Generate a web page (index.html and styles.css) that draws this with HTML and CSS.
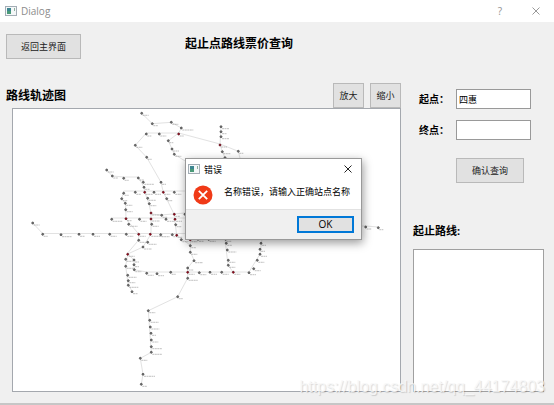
FILE: index.html
```html
<!DOCTYPE html>
<html lang="zh-CN">
<head>
<meta charset="utf-8">
<title>Dialog</title>
<link rel="stylesheet" href="styles.css">
</head>
<body>
<div class="window">
  <header class="titlebar">
    <svg class="app-icon" viewBox="0 0 12 10" aria-hidden="true"><rect x=".5" y=".5" width="11" height="9" fill="#f4f7f8" stroke="#a3adb5"/><rect x="2" y="2" width="4" height="6" fill="#3c8590"/><rect x="2" y="5" width="4" height="3" fill="#4a9a78"/><rect x="9" y="2" width="1" height="3" fill="#8eb09c"/></svg>
    <span class="window-title">Dialog</span>
    <button class="caption-button" type="button" aria-label="帮助">?</button>
    <button class="caption-button" type="button" aria-label="关闭"><svg class="close-icon" viewBox="0 0 8 8"><path d="M.5 .5l7 7M7.500 .5l-7 7"/></svg></button>
  </header>

  <main class="content">
    <div class="top">
      <button class="button back" type="button">返回主界面</button>
      <h1 class="heading">起止点路线票价查询</h1>
    </div>

    <section class="map-panel">
      <div class="map-bar">
        <h2 class="heading">路线轨迹图</h2>
        <button class="button zoom" type="button">放大</button>
        <button class="button zoom" type="button">缩小</button>
      </div>
      <div class="map-frame">
        <svg class="map" viewBox="13 109 387 281" role="img" aria-label="路线轨迹图">
          <g id="lines" class="lines"></g>
          <g id="stations"></g>
        </svg>
      </div>
    </section>

    <aside class="side">
      <form class="query">
        <label class="field-label" for="start">起点：</label>
        <input class="field" id="start" type="text" value="四惠">
        <label class="field-label" for="end">终点：</label>
        <input class="field" id="end" type="text">
        <button class="button confirm" type="button">确认查询</button>
      </form>
      <label class="result-label" for="route">起止路线:</label>
      <textarea class="result" id="route" readonly></textarea>
    </aside>
  </main>

  <div class="watermark">https://blog.csdn.net/qq_44174803</div>

  <div class="message" role="alertdialog" aria-labelledby="message-title" aria-describedby="message-text">
    <div class="message-head">
      <svg class="app-icon" viewBox="0 0 12 10" aria-hidden="true"><rect x=".5" y=".5" width="11" height="9" fill="#f4f7f8" stroke="#a3adb5"/><rect x="2" y="2" width="4" height="6" fill="#3c8590"/><rect x="2" y="5" width="4" height="3" fill="#4a9a78"/><rect x="9" y="2" width="1" height="3" fill="#8eb09c"/></svg>
      <span class="message-title" id="message-title">错误</span>
      <button class="message-close" type="button" aria-label="关闭"><svg class="close-icon" viewBox="0 0 8 8"><path d="M.5 .5l7 7M7.500 .5l-7 7"/></svg></button>
    </div>
    <div class="message-body">
      <svg class="error-icon" viewBox="0 0 20 20" aria-hidden="true"><circle cx="10" cy="10" r="9.500" fill="#f03a17"/><path d="M5.800 5.800l8.400 8.400M14.200 5.800l-8.400 8.400" stroke="#fff" stroke-width="1.800"/></svg>
      <p class="message-text" id="message-text">名称错误，请输入正确站点名称</p>
    </div>
    <div class="message-foot"><button class="ok" type="button">OK</button></div>
  </div>
</div>
<script src="map.js"></script>
</body>
</html>
```
FILE: styles.css
```css
* { box-sizing: border-box; }

body {
  margin: 0;
  font-family: "Noto Sans", "Noto Sans CJK SC", sans-serif;
  font-size: 10px;
  color: #000;
  background: #f0f0f0;
}

button, input, textarea { font: inherit; color: inherit; }

.window {
  position: relative;
  display: flex;
  flex-direction: column;
  min-height: 100vh;
  border-bottom: 2px solid #c6c6c6;
}

.titlebar {
  display: flex;
  align-items: center;
  height: 22px;
  padding: 0 0 0 5px;
  background: #fff;
  color: #8c8c8c;
}

.app-icon { width: 12px; height: 10px; flex: none; }

.window-title {
  flex: 1;
  margin-left: 4px;
  font-family: "Open Sans", sans-serif;
}

.caption-button {
  width: 36px;
  height: 20px;
  padding: 0;
  border: 0;
  background: none;
  color: #999;
}

.close-icon {
  display: block;
  width: 8px;
  height: 8px;
  margin: auto;
  fill: none;
  stroke: currentColor;
}

.content {
  flex: 1;
  display: grid;
  grid-template-columns: minmax(0, 1fr) 131px;
  grid-template-rows: 61px 1fr;
  column-gap: 12px;
  padding: 0 10px 11px 6px;
}

.top {
  grid-column: 1 / -1;
  display: flex;
  align-items: flex-start;
  padding-top: 12px;
}

.heading {
  margin: 0;
  font-size: 12px;
  line-height: 20px;
  font-weight: 700;
}

.top .heading { margin-left: 104px; }

.button {
  height: 25px;
  padding: 0;
  border: 1px solid #b9b9b9;
  background: #e1e1e1;
  font-size: 9px;
  line-height: 12px;
  color: #222;
}

.back { width: 75px; }
.zoom { width: 31px; }

.map-panel {
  display: flex;
  flex-direction: column;
}

.map-bar {
  display: flex;
  align-items: center;
  gap: 6px;
}

.map-bar .heading { flex: 1; }

.map-frame {
  flex: 1;
  margin-left: 6px;
  border: 1px solid #a4a8ae;
  background: #fff;
}

.map { display: block; width: 100%; }
.lines { fill: none; stroke: #e2e2e2; stroke-width: 1; }
.station { fill: #777; stroke: #444; stroke-width: .7; }
.transfer { fill: #b00018; stroke: #501018; }
.name { stroke: #888; stroke-width: .8; stroke-dasharray: 2 .5; opacity: .65; }

.side {
  display: flex;
  flex-direction: column;
}

.query {
  display: grid;
  grid-template-columns: 37px 75px;
  gap: 11px 0;
  align-items: center;
  padding: 6px 0 0 6px;
}

.field-label { font-size: 10px; line-height: 20px; font-weight: 700; }

.field {
  width: 100%;
  height: 20px;
  padding: 0 2px;
  border: 1px solid #999;
  background: #fff;
  font-size: 9px;
}

.confirm { grid-column: 2; width: 68px; margin-top: 7px; }

.result-label {
  margin-top: 38px;
  font-size: 11px;
  line-height: 20px;
  font-weight: 700;
}

.result {
  flex: 1;
  width: 100%;
  margin-top: 8px;
  border: 1px solid #a0a0a0;
  background: #fff;
  resize: none;
}

.watermark {
  position: absolute;
  right: 9px;
  bottom: 6px;
  font-family: "Liberation Sans", sans-serif;
  font-size: 16px;
  line-height: 20px;
  color: rgba(248, 248, 248, .85);
  text-shadow: 1px 1px 1px rgba(0, 0, 0, .15);
  pointer-events: none;
}

.message {
  position: absolute;
  left: 185px;
  top: 158px;
  width: 177px;
  border: 1px solid #999;
  background: #fff;
  box-shadow: 1px 3px 9px rgba(0, 0, 0, .4);
}

.message-head {
  display: flex;
  align-items: center;
  height: 20px;
  padding: 0 9px 0 2px;
}

.message-title { flex: 1; margin-left: 4px; font-size: 9px; }
.message-close { width: 8px; padding: 0; border: 0; background: none; color: #222; }

.message-body {
  display: flex;
  align-items: flex-start;
  gap: 11px;
  height: 30px;
  padding: 6px 0 0 7px;
}

.error-icon { width: 20px; height: 20px; flex: none; }
.message-text { margin: 0; font-size: 9px; line-height: 14px; white-space: nowrap; }

.message-foot {
  display: flex;
  justify-content: flex-end;
  height: 30px;
  padding: 6px 7px;
  border-top: 1px solid #e2e2e2;
  background: #f0f0f0;
}

.ok {
  width: 57px;
  height: 17px;
  padding: 0;
  border: 2px solid #0078d7;
  background: #e1e1e1;
  font-family: "Open Sans", sans-serif;
  line-height: 13px;
}
```
FILE: map.js
```js
// Each station: x, y, width of its name mark.
const stations = [
  [141.700,113.300,6],[152.300,123.700,5],[171.300,122.300,6],[181.300,128,11],[146.300,134,4],[159.300,134,6],
  [135.300,145.300,6],[146.700,157.300,4],[168.300,140.700,4],[172,149,6],[174.300,154.300,6],
  [221,126.700,7],[221,131.700,5],[221,136.700,7],[222.300,151.700,7],[225,157.700,6],[238.300,151.300,4],
  [106.700,170,6],[112.300,176,5],[123.700,178.300,4],[138.300,178,5],[143.300,182.300,10],[144,187.300,5],
  [154,192.300,6],[135.300,192.300,5],[123.700,193.300,4],[121.700,198.700,5],[125.300,203.300,6],
  [147.700,198.300,7],[149.300,203.700,6],[161,182.300,4],[174.300,192.300,6],[166.700,198.700,5],
  [125.700,209.700,6],[32.700,223,6],[42.700,234.300,4],[61,234.700,10],[79,234.300,5],[93,234.300,6],
  [109.700,234.300,6],[126.300,234.300,6],[111.700,219.300,10],[139.500,219.300,6],[128.700,224.300,8],
  [151.700,224.300,6],[138.700,240.300,6],[147.700,242.300,8],[143,247,8],[125.700,259.300,6],[134,260,4],
  [134,264.700,4],[125.700,266.300,8],[134.300,269.700,6],[146.700,273.300,6],[157,273.700,6],
  [127.700,275.300,8],[128.300,280.700,6],[128.300,285.300,9],[132,291.700,5],[161.700,215.300,5],
  [166,219.300,8],[185,214.300,4],[175.700,224.700,5],[160.700,234.700,8],[172.300,234.700,4],
  [181.300,239.700,6],[198,239.300,5],[208.700,239.300,6],[225.700,239.300,5],[190.300,245.700,5],
  [190.300,252.300,6],[194,260.700,8],[187.700,268,5],[187.700,278.300,9],[177.700,296.700,4],
  [170.700,272.300,4],[199.300,272.700,6],[210,272.300,6],[221.700,272.300,6],[249,272.700,6],
  [226.300,243.300,5],[227.300,250,8],[228.300,260.300,6],[228.300,265.300,6],[261,243.300,4],
  [260,249.300,4],[260,254.300,6],[257.300,260.300,6],[253.700,268.700,6],[148.300,310.700,6],
  [149.700,320.300,8],[150.300,327,8],[151,333.300,4],[151.300,340,6],[151.300,346.700,10],
  [151.300,352.300,10],[140.300,358.300,6],[143,374.300,11],[141.300,384.300,5],[365.700,227,5],[378.300,227.700,4]
];

const transfers = [
  [178.700,134,4],[220,145,6],[144.700,192.300,7],[163.300,192.300,6],[138.700,234.300,6],[150.300,234.300,11],
  [126,218.700,5],[151,219,8],[151,213,10],[127.700,254.300,6],[174.300,214.300,5],[175,219.300,6],
  [176.700,235.300,5],[190.300,239.700,6],[187.700,272.300,6],[233.300,272.300,6]
];

const lines = [
  "141.7,113.3 152.3,123.7 171.3,122.3 181.3,128 178.7,133",
  "163.3,192.3 161,182.3 146.7,157.3 135.3,145.3 146.3,133 178.7,133 220,144 238.3,151.300 241,162",
  "178.7,133 168.3,140.7 172,149 174.3,154.300 190,164",
  "221,126.700 220,145 225,158",
  "106.7,170 112.3,176 123.7,177 138.3,177 144,187 144.7,192 149,204 151,213 151,234 143,247 127.7,254",
  "190,191 123.7,191 121.7,198.700 125.5,203 126,219 138.7,234 138.7,240 127.7,253",
  "111.7,218 190,218",
  "151,214 161,215 185,213",
  "163.3,192 174,214 176.7,235 190,245",
  "32.7,223 42.7,233.500 190,233.500",
  "127.7,254 125.7,266 128,284 132,291",
  "127.7,254 134,260 134,269.700 146.7,272 249,272 260,254 262,239",
  "190.3,239 190.3,252 194,260 187.7,268 187.7,278 177.7,296.700 148.3,310.700 151.3,352.300 140.3,358.300 143,374.300 141.3,384.300",
  "225,239 228,265 233,272",
  "350,226 365.7,226 378.3,227"
];

const NS = "http://www.w3.org/2000/svg";
function add(parent, tag, attrs) {
  const el = document.createElementNS(NS, tag);
  for (const key in attrs) el.setAttribute(key, attrs[key]);
  parent.appendChild(el);
}

const lineLayer = document.getElementById("lines");
const stationLayer = document.getElementById("stations");
lines.forEach(points => add(lineLayer, "polyline", { points }));

function drawStations(list, cls) {
  list.forEach(([x, y, w]) => {
    add(stationLayer, "path", { d: `M${x + 1} ${y + 2}h${w}`, class: "name" });
    add(stationLayer, "circle", { cx: x, cy: y, r: 1, class: cls });
  });
}
drawStations(stations, "station");
drawStations(transfers, "station transfer");
```
